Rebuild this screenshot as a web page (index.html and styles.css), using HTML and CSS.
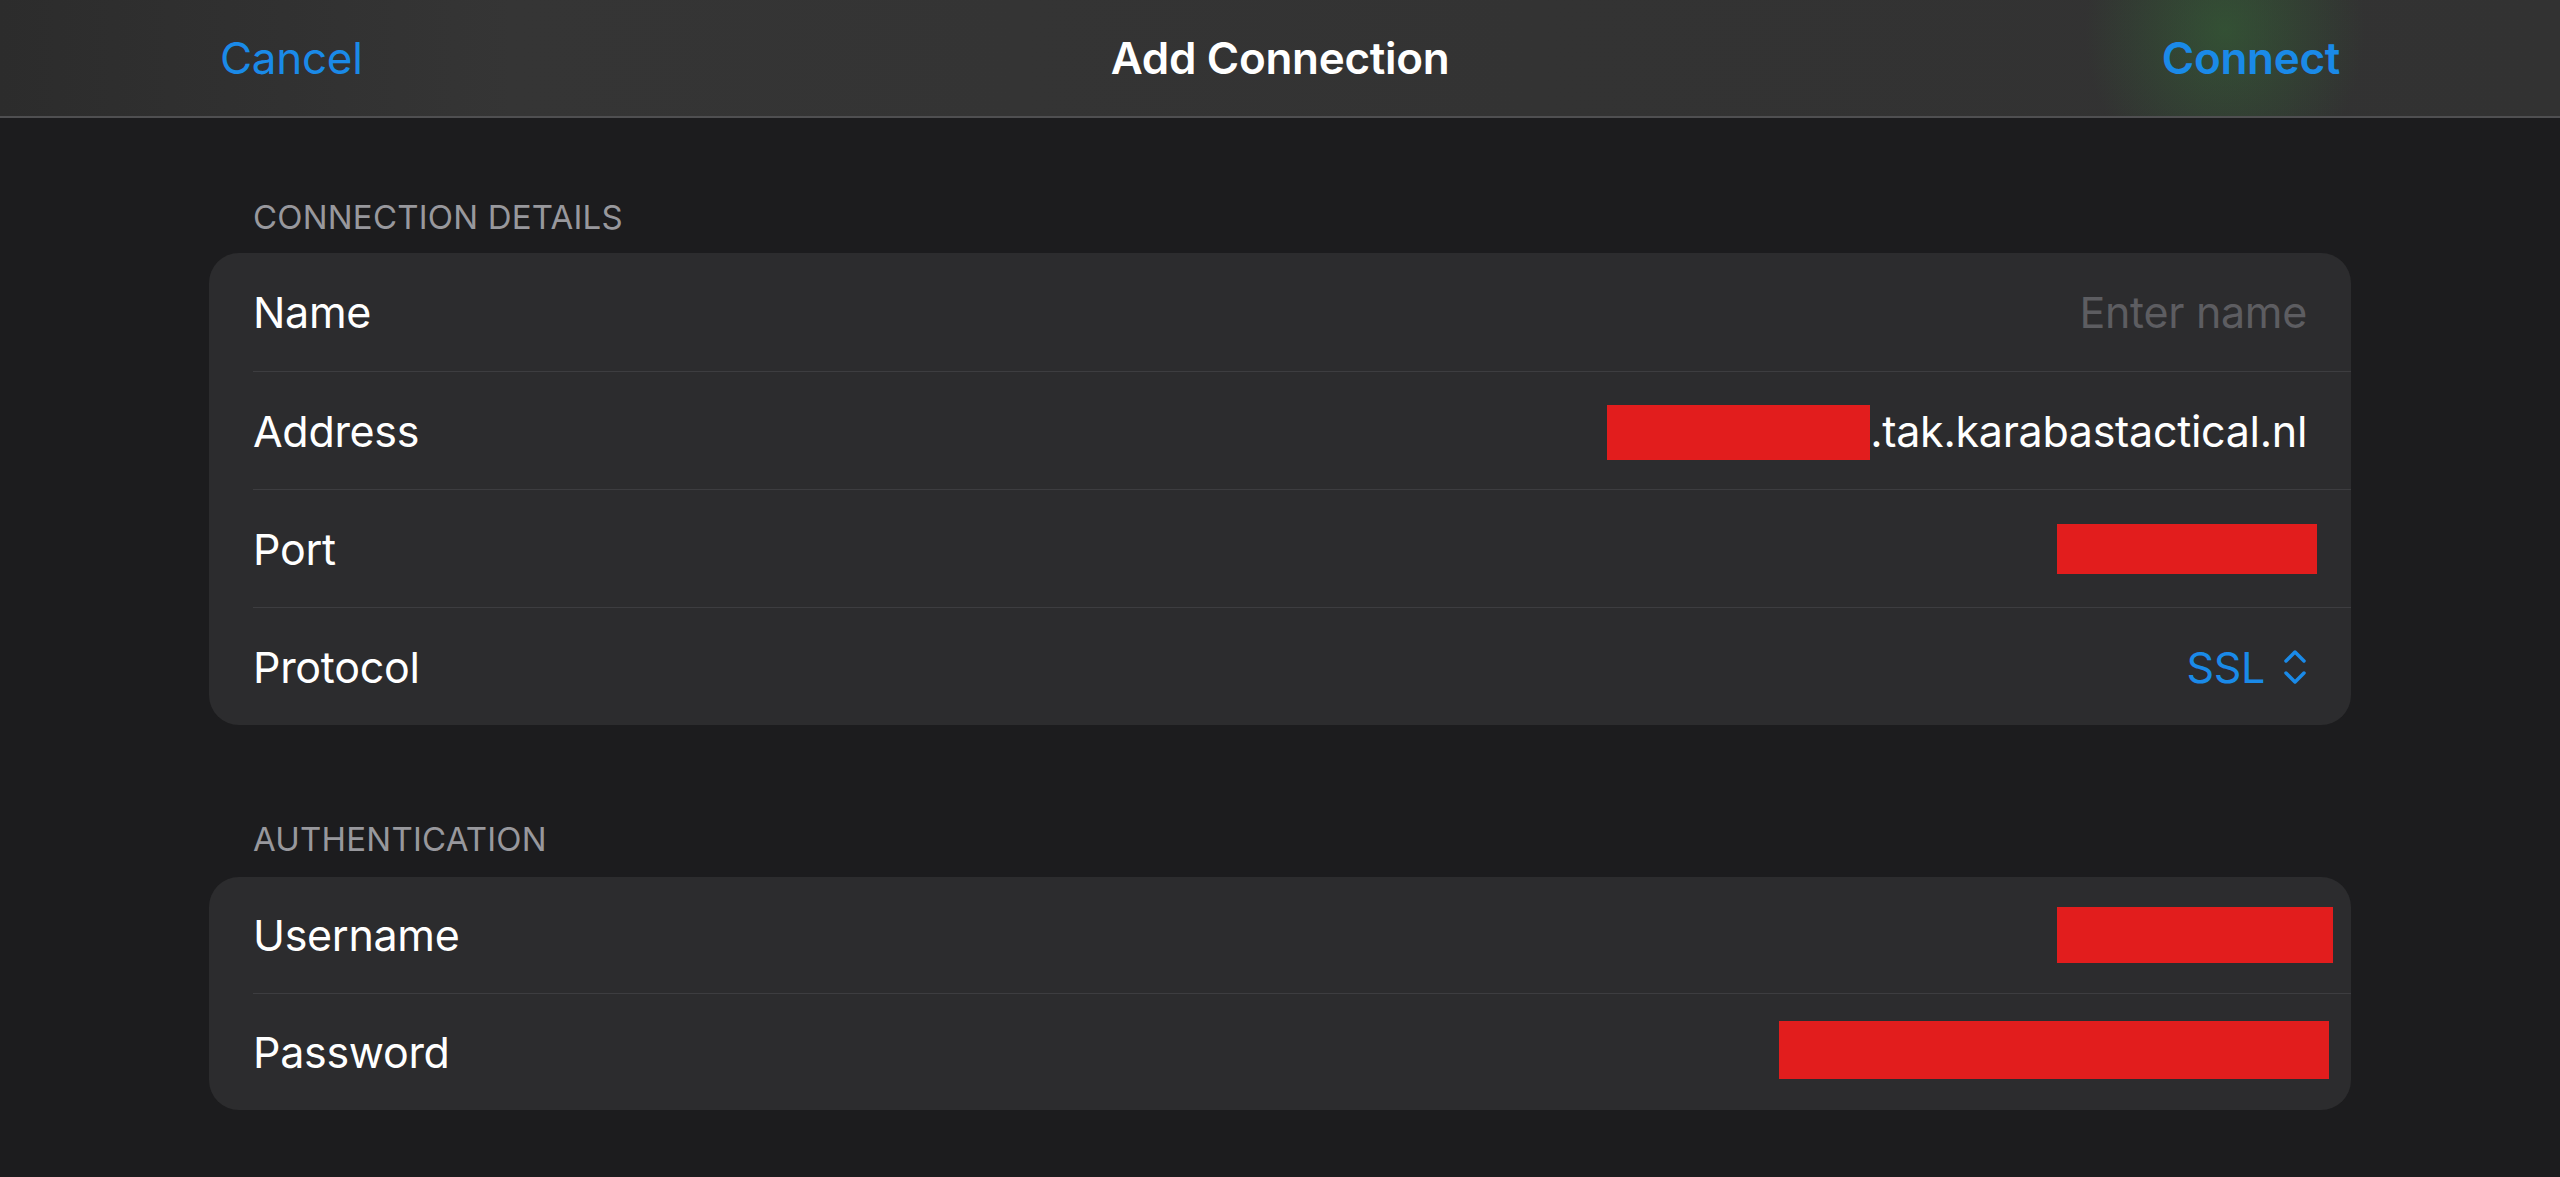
FILE: index.html
```html
<!DOCTYPE html>
<html lang="en">
<head>
    <meta charset="UTF-8">
    <meta name="viewport" content="width=device-width, initial-scale=1.0">
    <title>Add Connection</title>
    <link rel="stylesheet" href="styles.css">
</head>
<body>
    <div class="nav-bar">
        <span class="nav-button">Cancel</span>
        <span class="nav-title">Add Connection</span>
        <span class="nav-button primary">Connect</span>
    </div>

    <div class="content">
        <div class="section-title">CONNECTION DETAILS</div>
        <div class="group">
            <div class="row">
                <span class="label">Name</span>
                <span class="value placeholder">Enter name</span>
            </div>
            <div class="row">
                <span class="label">Address</span>
                <span class="value"><span class="redact redact-host"></span>.tak.karabastactical.nl</span>
            </div>
            <div class="row">
                <span class="label">Port</span>
                <span class="value"><span class="redact redact-port"></span></span>
            </div>
            <div class="row">
                <span class="label">Protocol</span>
                <span class="value picker">SSL
                    <svg class="chevrons" width="24" height="36" viewBox="0 0 24 36">
                        <path d="M3 12 L12 3 L21 12" />
                        <path d="M3 24 L12 33 L21 24" />
                    </svg>
                </span>
            </div>
        </div>

        <div class="section-title second">AUTHENTICATION</div>
        <div class="group compact">
            <div class="row">
                <span class="label">Username</span>
                <span class="value"><span class="redact redact-user"></span></span>
            </div>
            <div class="row">
                <span class="label">Password</span>
                <span class="value"><span class="redact redact-pass"></span></span>
            </div>
        </div>
    </div>
</body>
</html>
```

FILE: styles.css
```css
body {
    margin: 0;
    height: 1177px;
    overflow: hidden;
    background-color: #1c1c1e;
    color: #fff;
    font-family: Inter, "Noto Sans", sans-serif;
}
.nav-bar {
    height: 116px;
    display: grid;
    grid-template-columns: 1fr auto 1fr;
    align-items: center;
    padding: 0 220px;
    background-color: #323232;
    background-image:
        radial-gradient(ellipse 140px 160px at 2225px 30px, rgba(52, 110, 55, 0.5), rgba(52, 110, 55, 0) 100%),
        linear-gradient(90deg, #2c2c2c 0%, #353535 20%, #333333 60%, #323232 100%);
    border-bottom: 2px solid #4f4f51;
}
.nav-button {
    font-size: 44px;
    color: #1a8ae8;
    letter-spacing: -0.3px;
}
.nav-button.primary {
    justify-self: end;
    font-weight: 600;
}
.nav-title {
    font-size: 44px;
    font-weight: 600;
    letter-spacing: -0.3px;
}
.content {
    padding: 0 209px;
}
.section-title {
    margin-top: 79px;
    padding-left: 44px;
    padding-bottom: 16px;
    font-size: 33px;
    line-height: 40px;
    color: #98989d;
    letter-spacing: 0.2px;
}
.section-title.second {
    margin-top: 94px;
    padding-bottom: 18px;
}
.group {
    background-color: #2c2c2e;
    border-radius: 30px;
    overflow: hidden;
}
.row {
    height: 117px;
    display: flex;
    align-items: center;
    justify-content: space-between;
    margin-left: 44px;
    padding-right: 44px;
    border-top: 1px solid #3d3d40;
}
.row:first-child {
    border-top: none;
    height: 118px;
}
.compact .row:first-child {
    height: 116px;
}
.compact .row {
    height: 116px;
}
.label {
    font-size: 43px;
    letter-spacing: -0.3px;
}
.value {
    display: flex;
    align-items: center;
    font-size: 43px;
    letter-spacing: -0.3px;
}
.placeholder {
    color: #5d5d61;
}
.picker {
    color: #1a8ae8;
    gap: 18px;
}
.chevrons {
    fill: none;
    stroke: #1a8ae8;
    stroke-width: 3.5;
    stroke-linecap: round;
    stroke-linejoin: round;
}
.redact {
    display: block;
    background-color: #e21d1d;
}
.redact-host {
    width: 263px;
    height: 55px;
    margin-top: 4px;
}
.redact-port {
    width: 260px;
    height: 50px;
    margin-right: -10px;
}
.redact-user {
    width: 276px;
    height: 56px;
    margin-right: -26px;
}
.redact-pass {
    width: 550px;
    height: 58px;
    margin-right: -22px;
    margin-top: -4px;
}
```
